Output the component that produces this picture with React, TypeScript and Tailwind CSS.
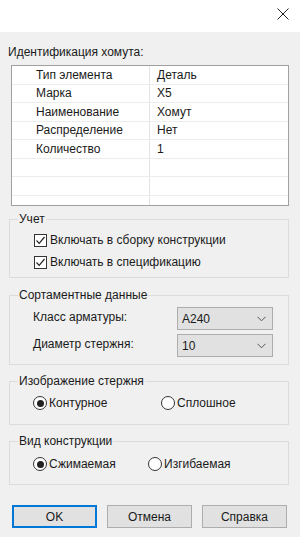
import React from "react";

const rows: [string, string][] = [
  ["Тип элемента", "Деталь"],
  ["Марка", "X5"],
  ["Наименование", "Хомут"],
  ["Распределение", "Нет"],
  ["Количество", "1"],
  ["", ""],
  ["", ""],
];

function Check() {
  return (
    <span className="w-[13px] h-[13px] border border-[#333333] bg-white flex items-center justify-center shrink-0">
      <svg width="11" height="11" viewBox="0 0 11 11">
        <path d="M1.5 5.5 L4.2 8.3 L9.5 2" fill="none" stroke="#222" strokeWidth="1.2" />
      </svg>
    </span>
  );
}

function Radio({ on }: { on: boolean }) {
  return (
    <span className="w-[14px] h-[14px] rounded-full border border-[#333333] bg-white flex items-center justify-center shrink-0">
      {on && <span className="w-[7px] h-[7px] rounded-full bg-[#222222]" />}
    </span>
  );
}

function Combo({ value }: { value: string }) {
  return (
    <div className="w-[96px] h-[23px] bg-[#e1e1e1] border border-[#adadad] flex items-center justify-between pl-[4px] pr-[6px]">
      <span>{value}</span>
      <svg width="9" height="6" viewBox="0 0 9 6">
        <path d="M0.5 0.8 L4.5 4.8 L8.5 0.8" fill="none" stroke="#555" strokeWidth="1" />
      </svg>
    </div>
  );
}

function Group({ title, h, children, mt }: { title: string; h: string; children: React.ReactNode; mt: string }) {
  return (
    <fieldset className={`mx-[9px] w-[280px] border border-[#dcdcdc] ${h} ${mt}`}>
      <legend className="ml-[8px] px-[1px] leading-[14px]">{title}</legend>
      {children}
    </fieldset>
  );
}

function Btn({ label, primary }: { label: string; primary?: boolean }) {
  return (
    <div
      className={
        primary
          ? "w-[85px] h-[23px] bg-[#e1e1e1] border-2 border-[#0078d7] flex items-center justify-center"
          : "w-[85px] h-[23px] bg-[#e1e1e1] border border-[#adadad] flex items-center justify-center"
      }
    >
      {label}
    </div>
  );
}

export default function App() {
  return (
    <div
      className="w-[300px] h-[537px] bg-[#f0f0f0] flex flex-col text-[12px] text-[#1a1a1a] overflow-hidden"
      style={{ fontFamily: '"Liberation Sans", Arial, sans-serif' }}
    >
      <div className="h-[32px] bg-white flex justify-end items-start shrink-0">
        <svg width="12" height="12" viewBox="0 0 12 12" className="mt-[8px] mr-[11px]">
          <path d="M0.5 0.5 L11.5 11.5 M11.5 0.5 L0.5 11.5" stroke="#222" strokeWidth="1" />
        </svg>
      </div>
      <div className="mt-[13px] ml-[8px] leading-[14px]">Идентификация хомута:</div>
      <div className="mt-[6px] ml-[11px] w-[278px] h-[141px] border border-[#a0a0a0] bg-white overflow-hidden">
        {rows.map(([a, b], i) => (
          <div key={i} className="h-[18.5px] flex border-b border-[#ececec]">
            <div className="w-[138px] border-r border-[#e3e3e3] pl-[24px] flex items-center">{a}</div>
            <div className="pl-[7px] flex items-center">{b}</div>
          </div>
        ))}
        <div className="h-[20px] flex">
          <div className="w-[138px] border-r border-[#e3e3e3]" />
        </div>
      </div>

      <Group title="Учет" h="h-[66px]" mt="mt-[6px]">
        <div className="pl-[24px] pt-[7px] flex flex-col gap-[8px]">
          <div className="flex items-center gap-[3px] h-[14px]">
            <Check />
            <span>Включать в сборку конструкции</span>
          </div>
          <div className="flex items-center gap-[3px] h-[14px]">
            <Check />
            <span>Включать в спецификацию</span>
          </div>
        </div>
      </Group>

      <Group title="Сортаментные данные" h="h-[77px]" mt="mt-[10px]">
        <div className="pl-[23px] pt-[5px] flex flex-col gap-[4px]">
          <div className="flex items-center justify-between pr-[15px]">
            <span className="-mt-[4px]">Класс арматуры:</span>
            <Combo value="A240" />
          </div>
          <div className="flex items-center justify-between pr-[15px]">
            <span className="-mt-[4px]">Диаметр стержня:</span>
            <Combo value="10" />
          </div>
        </div>
      </Group>

      <Group title="Изображение стержня" h="h-[51px]" mt="mt-[9px]">
        <div className="pl-[23px] pt-[8px] flex items-center h-[22px]">
          <div className="flex items-center gap-[2px] w-[128px]">
            <Radio on />
            <span>Контурное</span>
          </div>
          <div className="flex items-center gap-[2px]">
            <Radio on={false} />
            <span>Сплошное</span>
          </div>
        </div>
      </Group>

      <Group title="Вид конструкции" h="h-[51px]" mt="mt-[9px]">
        <div className="pl-[23px] pt-[9px] flex items-center h-[23px]">
          <div className="flex items-center gap-[2px] w-[115px]">
            <Radio on />
            <span>Сжимаемая</span>
          </div>
          <div className="flex items-center gap-[2px]">
            <Radio on={false} />
            <span>Изгибаемая</span>
          </div>
        </div>
      </Group>

      <div className="mt-[20px] ml-[12px] flex gap-[10px]">
        <Btn label="OK" primary />
        <Btn label="Отмена" />
        <Btn label="Справка" />
      </div>
    </div>
  );
}
